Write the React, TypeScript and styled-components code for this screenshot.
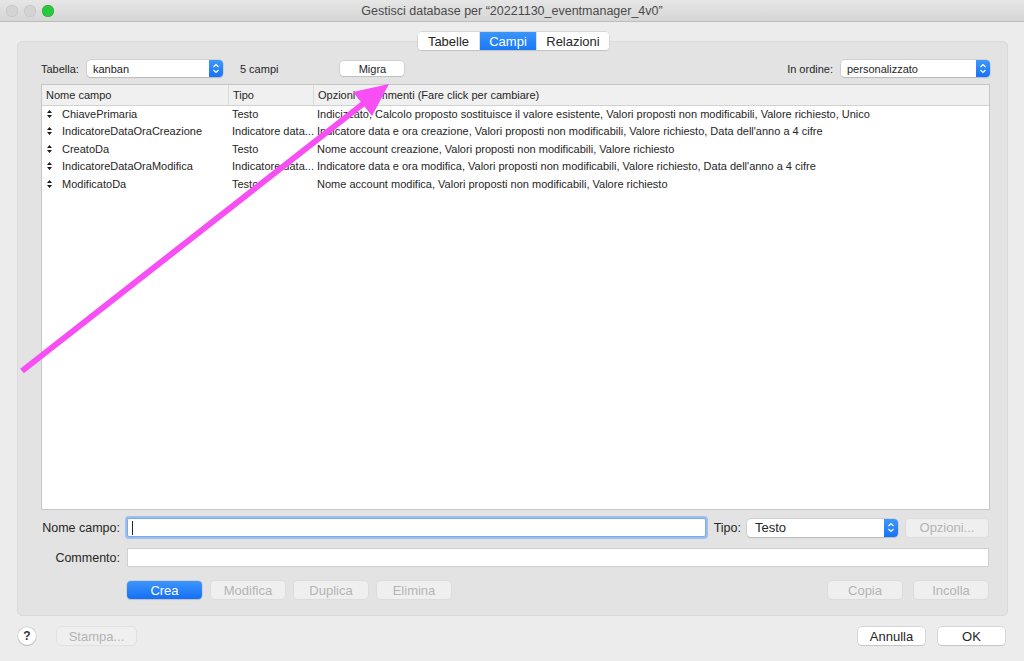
import React from "react";
import styled, { createGlobalStyle } from "styled-components";

const GlobalStyle = createGlobalStyle`
  html, body {
    margin: 0;
    padding: 0;
    background: #ececec;
  }
  body {
    font-family: "Liberation Sans", Arial, sans-serif;
    color: #262626;
  }
`;

const Window = styled.div`
  position: relative;
  width: 1024px;
  height: 661px;
  background: #ececec;
  display: flex;
  flex-direction: column;
  overflow: hidden;
`;

const TitleBar = styled.div`
  height: 21px;
  flex: none;
  display: flex;
  align-items: center;
  position: relative;
  background: linear-gradient(#e6e6e6, #d6d6d6);
  border-bottom: 1px solid #bdbdbd;
`;

const Lights = styled.div`
  display: flex;
  gap: 6px;
  padding-left: 6px;
`;

const Light = styled.span<{ $color: string; $border: string }>`
  width: 12px;
  height: 12px;
  border-radius: 50%;
  background: ${(p) => p.$color};
  box-shadow: inset 0 0 0 0.5px ${(p) => p.$border};
`;

const Title = styled.div`
  position: absolute;
  left: 0;
  right: 0;
  text-align: center;
  font-size: 12.5px;
  color: #4a4a4a;
`;

const Body = styled.div`
  flex: 1;
  display: flex;
  flex-direction: column;
  padding: 10px 16px 0 17px;
`;

const TabsRow = styled.div`
  display: flex;
  justify-content: center;
  margin-bottom: -9px;
  position: relative;
  z-index: 1;
  padding-left: 2px;
`;

const Segments = styled.div`
  display: flex;
  height: 18px;
  background: #fff;
  border-radius: 4px;
  box-shadow: 0 0 0 0.5px #c4c4c4, 0 1px 1px rgba(0, 0, 0, 0.15);
  overflow: hidden;
`;

const Segment = styled.div<{ $active?: boolean; $w: number }>`
  width: ${(p) => p.$w}px;
  display: flex;
  align-items: center;
  justify-content: center;
  font-size: 13px;
  color: ${(p) => (p.$active ? "#fff" : "#262626")};
  background: ${(p) => (p.$active ? "linear-gradient(#3a95fb, #1a79f7)" : "#fff")};
  & + & {
    border-left: 1px solid #dcdcdc;
  }
`;

const Panel = styled.div`
  height: 575px;
  background: #e3e3e3;
  border: 1px solid #dadada;
  border-radius: 5px;
  box-sizing: border-box;
  padding: 18px 17px 0 23px;
  display: flex;
  flex-direction: column;
`;

const TopRow = styled.div`
  display: flex;
  align-items: center;
  height: 17px;
  font-size: 11px;
`;

const SmallLabel = styled.span<{ $ml?: number }>`
  font-size: 11px;
  color: #262626;
  margin-left: ${(p) => p.$ml ?? 0}px;
  margin-right: 8px;
`;

const Popup = styled.div<{ $w: number; $h: number; $fs: number }>`
  width: ${(p) => p.$w}px;
  height: ${(p) => p.$h}px;
  background: #fff;
  border-radius: 4px;
  box-shadow: 0 0 0 0.5px #bdbdbd, 0 1px 1px rgba(0, 0, 0, 0.18);
  display: flex;
  align-items: center;
  font-size: ${(p) => p.$fs}px;
  color: #262626;
  overflow: hidden;
  flex: none;
`;

const PopupText = styled.span<{ $pl: number }>`
  flex: 1;
  padding-left: ${(p) => p.$pl}px;
`;

const Stepper = styled.span`
  width: 14px;
  align-self: stretch;
  background: linear-gradient(#3f98fb, #1672f6);
  display: flex;
  align-items: center;
  justify-content: center;
`;

const Button = styled.div<{ $w: number; $variant?: "primary" | "disabled" | "normal" }>`
  width: ${(p) => p.$w}px;
  height: 18px;
  flex: none;
  border-radius: 4px;
  display: flex;
  align-items: center;
  justify-content: center;
  font-size: 13px;
  box-sizing: border-box;
  color: ${(p) => (p.$variant === "primary" ? "#fff" : p.$variant === "disabled" ? "#b4b4b4" : "#262626")};
  background: ${(p) =>
    p.$variant === "primary"
      ? "linear-gradient(#3d96fb, #1470f6)"
      : p.$variant === "disabled"
      ? "#efefef"
      : "#fff"};
  box-shadow: ${(p) =>
    p.$variant === "disabled"
      ? "0 0 0 0.5px #d6d6d6"
      : "0 0 0 0.5px #c2c2c2, 0 1px 1px rgba(0, 0, 0, 0.15)"};
`;

const SmallButton = styled(Button)`
  height: 15px;
  font-size: 11px;
`;

const Table = styled.div`
  margin-top: 7px;
  height: 426px;
  background: #fff;
  border: 1px solid #c6c6c6;
  box-sizing: border-box;
  display: flex;
  flex-direction: column;
  font-size: 11px;
  flex: none;
`;

const HeaderRow = styled.div`
  display: grid;
  grid-template-columns: 186px 85px 1fr;
  height: 20px;
  background: #f0f0f0;
  border-bottom: 1px solid #d2d2d2;
  flex: none;
`;

const HeaderCell = styled.div`
  display: flex;
  align-items: center;
  padding-left: 4px;
  color: #262626;
  & + & {
    border-left: 1px solid #dadada;
  }
`;

const Rows = styled.div`
  margin-top: -1px;
`;

const Row = styled.div`
  display: grid;
  grid-template-columns: 186px 85px 1fr;
  height: 17.5px;
  align-items: center;
  color: #262626;
  white-space: nowrap;
`;

const NameCell = styled.div`
  display: flex;
  align-items: center;
  padding-left: 5px;
  gap: 10px;
`;

const Cell = styled.div`
  padding-left: 4px;
`;

const Form = styled.div`
  display: grid;
  grid-template-columns: 79px 1fr;
  column-gap: 7px;
  margin-top: 8px;
  font-size: 13px;
`;

const FormLabel = styled.div`
  display: flex;
  justify-content: flex-end;
  align-items: center;
  white-space: nowrap;
  font-size: 12.5px;
  color: #262626;
`;

const FormLine = styled.div`
  display: flex;
  align-items: center;
`;

const TextInput = styled.div<{ $focused?: boolean }>`
  flex: 1;
  height: 19px;
  background: #fff;
  box-sizing: border-box;
  border: 1px solid ${(p) => (p.$focused ? "#7fa9e6" : "#d0d0d0")};
  box-shadow: ${(p) => (p.$focused ? "0 0 0 2px #9dbff0" : "none")};
  border-radius: ${(p) => (p.$focused ? "2px" : "0")};
  display: flex;
  align-items: center;
  padding-left: 4px;
`;

const Caret = styled.span`
  width: 1px;
  height: 14px;
  background: #222;
`;

const ButtonsLine = styled.div`
  grid-column: 2;
  display: flex;
  gap: 9px;
  margin-top: 14px;
`;

const Spacer = styled.div`
  flex: 1;
`;

const Footer = styled.div`
  display: flex;
  align-items: flex-start;
  height: 45px;
  padding-top: 11px;
  box-sizing: border-box;
  padding-right: 3px;
`;

const Help = styled.div`
  width: 18px;
  height: 18px;
  border-radius: 50%;
  background: #fff;
  box-shadow: 0 0 0 0.5px #bcbcbc, 0 1px 1px rgba(0, 0, 0, 0.2);
  display: flex;
  align-items: center;
  justify-content: center;
  font-size: 12px;
  font-weight: bold;
  color: #333;
  margin-left: 1px;
  margin-right: 21px;
`;

const ArrowOverlay = styled.svg`
  position: absolute;
  left: 0;
  top: 0;
  pointer-events: none;
`;

const Chevrons = () => (
  <svg width="8" height="11" viewBox="0 0 8 11">
    <path d="M1.5 4 L4 1.5 L6.5 4 M1.5 7 L4 9.5 L6.5 7" fill="none" stroke="#fff" strokeWidth="1.2" />
  </svg>
);

const Grip = () => (
  <svg width="5" height="8" viewBox="0 0 5 8">
    <path d="M2.5 0 L5 3 L0 3 Z M2.5 8 L5 5 L0 5 Z" fill="#1a1a1a" />
  </svg>
);

const fields = [
  ["ChiavePrimaria", "Testo", "Indicizzato, Calcolo proposto sostituisce il valore esistente, Valori proposti non modificabili, Valore richiesto, Unico"],
  ["IndicatoreDataOraCreazione", "Indicatore data...", "Indicatore data e ora creazione, Valori proposti non modificabili, Valore richiesto, Data dell'anno a 4 cifre"],
  ["CreatoDa", "Testo", "Nome account creazione, Valori proposti non modificabili, Valore richiesto"],
  ["IndicatoreDataOraModifica", "Indicatore data...", "Indicatore data e ora modifica, Valori proposti non modificabili, Valore richiesto, Data dell'anno a 4 cifre"],
  ["ModificatoDa", "Testo", "Nome account modifica, Valori proposti non modificabili, Valore richiesto"],
];

export default function App() {
  return (
    <Window>
      <GlobalStyle />
      <TitleBar>
        <Lights>
          <Light $color="#d3d3d3" $border="#bfbfbf" />
          <Light $color="#d3d3d3" $border="#bfbfbf" />
          <Light $color="#2ac840" $border="#23a534" />
        </Lights>
        <Title>Gestisci database per “20221130_eventmanager_4v0”</Title>
      </TitleBar>
      <Body>
        <TabsRow>
          <Segments>
            <Segment $w={61}>Tabelle</Segment>
            <Segment $w={56} $active>
              Campi
            </Segment>
            <Segment $w={72}>Relazioni</Segment>
          </Segments>
        </TabsRow>
        <Panel>
          <TopRow>
            <SmallLabel>Tabella:</SmallLabel>
            <Popup $w={136} $h={17} $fs={11}>
              <PopupText $pl={6}>kanban</PopupText>
              <Stepper>
                <Chevrons />
              </Stepper>
            </Popup>
            <SmallLabel $ml={17}>5 campi</SmallLabel>
            <SmallButton $w={64} style={{ marginLeft: 54 }}>
              Migra
            </SmallButton>
            <Spacer />
            <SmallLabel>In ordine:</SmallLabel>
            <Popup $w={149} $h={17} $fs={11}>
              <PopupText $pl={6}>personalizzato</PopupText>
              <Stepper>
                <Chevrons />
              </Stepper>
            </Popup>
          </TopRow>
          <Table>
            <HeaderRow>
              <HeaderCell>Nome campo</HeaderCell>
              <HeaderCell>Tipo</HeaderCell>
              <HeaderCell>Opzioni / Commenti (Fare click per cambiare)</HeaderCell>
            </HeaderRow>
            <Rows>
              {fields.map(([name, type, opts]) => (
                <Row key={name}>
                  <NameCell>
                    <Grip />
                    {name}
                  </NameCell>
                  <Cell>{type}</Cell>
                  <Cell>{opts}</Cell>
                </Row>
              ))}
            </Rows>
          </Table>
          <Form>
            <FormLabel>Nome campo:</FormLabel>
            <FormLine>
              <TextInput $focused>
                <Caret />
              </TextInput>
              <FormLabel style={{ marginLeft: 8, marginRight: 6 }}>Tipo:</FormLabel>
              <Popup $w={151} $h={18} $fs={13}>
                <PopupText $pl={8}>Testo</PopupText>
                <Stepper>
                  <Chevrons />
                </Stepper>
              </Popup>
              <Button $w={82} $variant="disabled" style={{ marginLeft: 8, marginRight: 2 }}>
                Opzioni...
              </Button>
            </FormLine>
            <FormLabel style={{ marginTop: 11 }}>Commento:</FormLabel>
            <FormLine style={{ marginTop: 11 }}>
              <TextInput style={{ marginRight: 1 }} />
            </FormLine>
            <ButtonsLine>
              <Button $w={75} $variant="primary">
                Crea
              </Button>
              <Button $w={74} $variant="disabled">
                Modifica
              </Button>
              <Button $w={74} $variant="disabled">
                Duplica
              </Button>
              <Button $w={74} $variant="disabled">
                Elimina
              </Button>
              <Spacer />
              <Button $w={74} $variant="disabled">
                Copia
              </Button>
              <Button $w={74} $variant="disabled" style={{ marginLeft: 3, marginRight: 2 }}>
                Incolla
              </Button>
            </ButtonsLine>
          </Form>
        </Panel>
        <Footer>
          <Help>?</Help>
          <Button $w={79} $variant="disabled">
            Stampa...
          </Button>
          <Spacer />
          <Button $w={67}>Annulla</Button>
          <Button $w={67} style={{ marginLeft: 13 }}>
            OK
          </Button>
        </Footer>
      </Body>
      <ArrowOverlay width="1024" height="661" viewBox="0 0 1024 661">
        <line x1="22" y1="371" x2="368" y2="100" stroke="#f84ff4" strokeWidth="6" strokeLinecap="butt" />
        <polygon points="389,84 372,116 353,92" fill="#f84ff4" />
      </ArrowOverlay>
    </Window>
  );
}
